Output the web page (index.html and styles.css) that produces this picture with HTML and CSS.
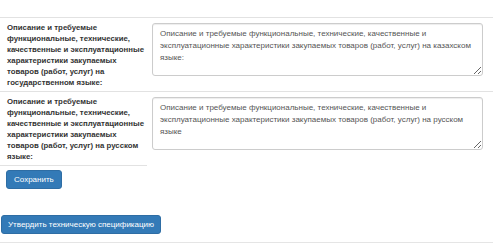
FILE: index.html
```html
<!DOCTYPE html>
<html lang="ru">
<head>
<meta charset="utf-8">
<link rel="stylesheet" href="styles.css">
</head>
<body>
<div class="page">
  <div class="form-grid">
    <div class="row">
      <div class="label">Описание и требуемые функциональные, технические, качественные и эксплуатационные характеристики закупаемых товаров (работ, услуг) на государственном языке:</div>
      <div class="field"><textarea class="input">Описание и требуемые функциональные, технические, качественные и эксплуатационные характеристики закупаемых товаров (работ, услуг) на казахском языке:</textarea></div>
    </div>
    <div class="row">
      <div class="label">Описание и требуемые функциональные, технические, качественные и эксплуатационные характеристики закупаемых товаров (работ, услуг) на русском языке:</div>
      <div class="field"><textarea class="input">Описание и требуемые функциональные, технические, качественные и эксплуатационные характеристики закупаемых товаров (работ, услуг) на русском языке</textarea></div>
    </div>
    <div class="row-actions">
      <div class="actions-cell"><button class="btn">Сохранить</button></div>
    </div>
  </div>
  <div class="footer">
    <button class="btn btn-wide">Утвердить техническую спецификацию</button>
  </div>
</div>
</body>
</html>
```

FILE: styles.css
```css
html, body {
  margin: 0;
  padding: 0;
  background: #fff;
}
body {
  font-family: "Liberation Sans", Arial, sans-serif;
  font-size: 8px;
  color: #333;
}
.page {
  padding-top: 17px;
  display: flex;
  flex-direction: column;
}
.form-grid {
  display: flex;
  flex-direction: column;
}
.row {
  display: grid;
  grid-template-columns: 147px 1fr;
  border-top: 1px solid #e2e2e2;
}
.label {
  font-weight: bold;
  font-size: 7.8px;
  line-height: 11px;
  padding: 4px 0 3px 7px;
  box-sizing: border-box;
}
.field {
  padding: 5px 10px 0 5px;
}
.input {
  display: block;
  box-sizing: border-box;
  width: 100%;
  height: 53px;
  margin: 0;
  padding: 4px 7px;
  border: 1px solid #ccc;
  border-radius: 3px;
  font-family: "Liberation Sans", Arial, sans-serif;
  font-size: 8px;
  line-height: 12px;
  color: #555;
  background: #fff;
  box-shadow: inset 0 1px 1px rgba(0,0,0,0.075);
  resize: vertical;
}
.row-actions {
  display: flex;
}
.actions-cell {
  width: 147px;
  border-top: 1px solid #e2e2e2;
  padding: 4px 0 0 6px;
  box-sizing: border-box;
}
.btn {
  display: inline-block;
  box-sizing: border-box;
  height: 19px;
  padding: 0 7px;
  font-family: "Liberation Sans", Arial, sans-serif;
  font-size: 8px;
  line-height: 17px;
  color: #fff;
  background: #337ab7;
  border: 1px solid #2e6da4;
  border-radius: 3px;
  white-space: nowrap;
  cursor: pointer;
}
.footer {
  margin-top: 26px;
  padding: 0 0 8px 1px;
  border-bottom: 1px solid #e5e5e5;
}
.btn-wide {
  padding: 0 6px;
}
```
